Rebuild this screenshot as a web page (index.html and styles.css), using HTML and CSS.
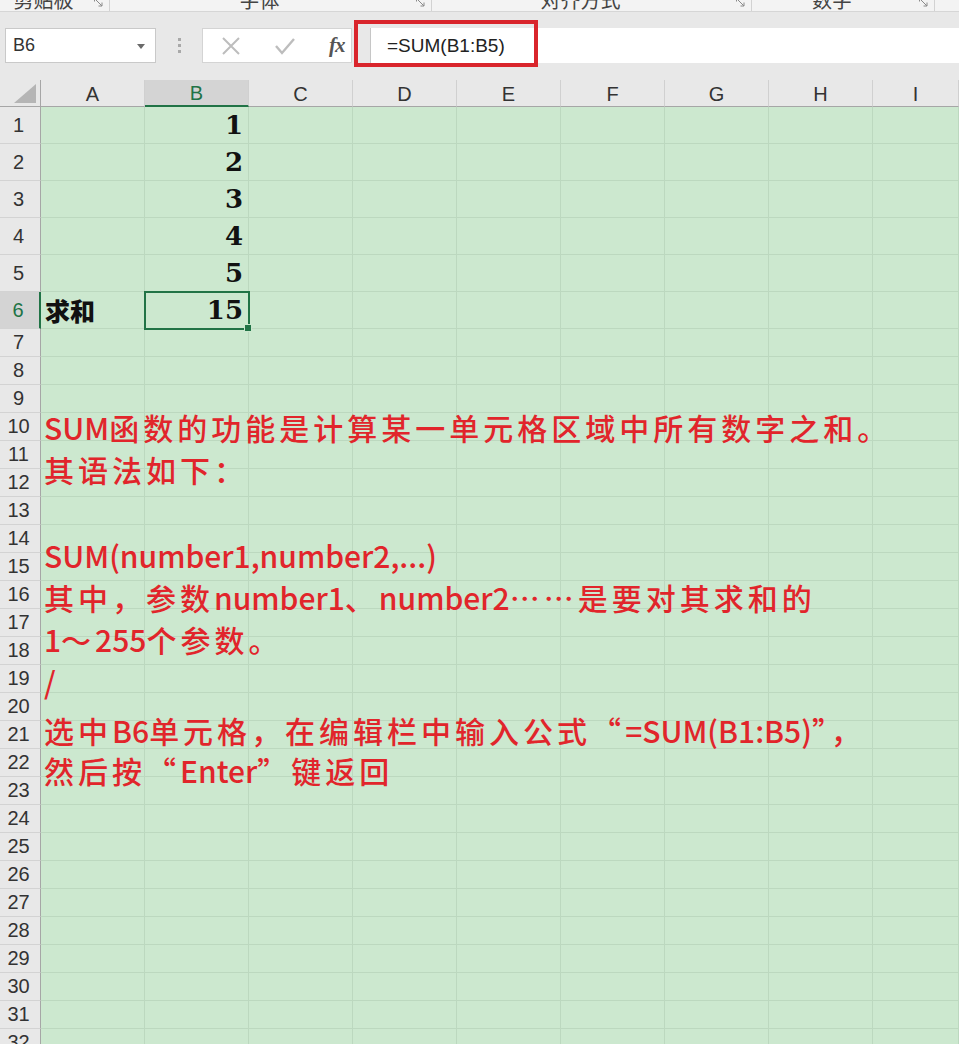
FILE: index.html
```html
<!DOCTYPE html>
<html lang="zh-CN">
<head>
<meta charset="utf-8">
<title>SUM函数</title>
<link rel="stylesheet" href="styles.css">
</head>
<body>
<div class="ribbon">
  <div class="group g1"><span class="label">剪贴板</span><span class="launcher"><svg width="9" height="9" viewBox="0 0 9 9"><path d="M0.5 3.5V0.5H3.5M2 2L8 8M8 4.5V8H4.5" fill="none" stroke="#8a8a8a" stroke-width="1"/></svg></span></div>
  <div class="group g2"><span class="label">字体</span><span class="launcher"><svg width="9" height="9" viewBox="0 0 9 9"><path d="M0.5 3.5V0.5H3.5M2 2L8 8M8 4.5V8H4.5" fill="none" stroke="#8a8a8a" stroke-width="1"/></svg></span></div>
  <div class="group g3"><span class="label">对齐方式</span><span class="launcher"><svg width="9" height="9" viewBox="0 0 9 9"><path d="M0.5 3.5V0.5H3.5M2 2L8 8M8 4.5V8H4.5" fill="none" stroke="#8a8a8a" stroke-width="1"/></svg></span></div>
  <div class="group g4"><span class="label">数字</span><span class="launcher"><svg width="9" height="9" viewBox="0 0 9 9"><path d="M0.5 3.5V0.5H3.5M2 2L8 8M8 4.5V8H4.5" fill="none" stroke="#8a8a8a" stroke-width="1"/></svg></span></div>
</div>

<div class="toolbar">
  <div class="namebox"><span>B6</span><svg class="caret" width="8" height="5" viewBox="0 0 8 5"><path d="M0 0H8L4 5Z" fill="#6a6a6a"/></svg></div>
  <div class="dots"><i></i><i></i><i></i></div>
  <div class="fxbox">
    <svg class="btn-x" width="20" height="20" viewBox="0 0 20 20"><path d="M2 2L18 18M18 2L2 18" stroke="#bdbdbd" stroke-width="2" fill="none"/></svg>
    <svg class="btn-ok" width="22" height="20" viewBox="0 0 22 20"><path d="M2 10L8 17L20 3" stroke="#bdbdbd" stroke-width="2.4" fill="none"/></svg>
    <span class="fx">fx</span>
  </div>
  <div class="formula">=SUM(B1:B5)</div>
  <div class="highlight"></div>
</div>

<div class="sheet">
  <div class="row hdr">
    <div class="corner"><svg width="22" height="19" viewBox="0 0 22 19"><path d="M22 0V19H0Z" fill="#b5b5b5"/></svg></div>
    <div class="ch">A</div><div class="ch sel">B</div><div class="ch">C</div><div class="ch">D</div><div class="ch">E</div><div class="ch">F</div><div class="ch">G</div><div class="ch">H</div><div class="ch last">I</div>
  </div>
  <div class="row tall"><div class="rh">1</div><div class="c"></div><div class="c num">1</div><div class="c"></div><div class="c"></div><div class="c"></div><div class="c"></div><div class="c"></div><div class="c"></div><div class="c last"></div></div>
  <div class="row tall"><div class="rh">2</div><div class="c"></div><div class="c num">2</div><div class="c"></div><div class="c"></div><div class="c"></div><div class="c"></div><div class="c"></div><div class="c"></div><div class="c last"></div></div>
  <div class="row tall"><div class="rh">3</div><div class="c"></div><div class="c num">3</div><div class="c"></div><div class="c"></div><div class="c"></div><div class="c"></div><div class="c"></div><div class="c"></div><div class="c last"></div></div>
  <div class="row tall"><div class="rh">4</div><div class="c"></div><div class="c num">4</div><div class="c"></div><div class="c"></div><div class="c"></div><div class="c"></div><div class="c"></div><div class="c"></div><div class="c last"></div></div>
  <div class="row tall"><div class="rh">5</div><div class="c"></div><div class="c num">5</div><div class="c"></div><div class="c"></div><div class="c"></div><div class="c"></div><div class="c"></div><div class="c"></div><div class="c last"></div></div>
  <div class="row tall"><div class="rh sel">6</div><div class="c label-cell">求和</div><div class="c num active">15</div><div class="c"></div><div class="c"></div><div class="c"></div><div class="c"></div><div class="c"></div><div class="c"></div><div class="c last"></div></div>
  <div class="row"><div class="rh">7</div><div class="c"></div><div class="c"></div><div class="c"></div><div class="c"></div><div class="c"></div><div class="c"></div><div class="c"></div><div class="c"></div><div class="c last"></div></div>
  <div class="row"><div class="rh">8</div><div class="c"></div><div class="c"></div><div class="c"></div><div class="c"></div><div class="c"></div><div class="c"></div><div class="c"></div><div class="c"></div><div class="c last"></div></div>
  <div class="row"><div class="rh">9</div><div class="c"></div><div class="c"></div><div class="c"></div><div class="c"></div><div class="c"></div><div class="c"></div><div class="c"></div><div class="c"></div><div class="c last"></div></div>
  <div class="row"><div class="rh">10</div><div class="c"></div><div class="c"></div><div class="c"></div><div class="c"></div><div class="c"></div><div class="c"></div><div class="c"></div><div class="c"></div><div class="c last"></div></div>
  <div class="row"><div class="rh">11</div><div class="c"></div><div class="c"></div><div class="c"></div><div class="c"></div><div class="c"></div><div class="c"></div><div class="c"></div><div class="c"></div><div class="c last"></div></div>
  <div class="row"><div class="rh">12</div><div class="c"></div><div class="c"></div><div class="c"></div><div class="c"></div><div class="c"></div><div class="c"></div><div class="c"></div><div class="c"></div><div class="c last"></div></div>
  <div class="row"><div class="rh">13</div><div class="c"></div><div class="c"></div><div class="c"></div><div class="c"></div><div class="c"></div><div class="c"></div><div class="c"></div><div class="c"></div><div class="c last"></div></div>
  <div class="row"><div class="rh">14</div><div class="c"></div><div class="c"></div><div class="c"></div><div class="c"></div><div class="c"></div><div class="c"></div><div class="c"></div><div class="c"></div><div class="c last"></div></div>
  <div class="row"><div class="rh">15</div><div class="c"></div><div class="c"></div><div class="c"></div><div class="c"></div><div class="c"></div><div class="c"></div><div class="c"></div><div class="c"></div><div class="c last"></div></div>
  <div class="row"><div class="rh">16</div><div class="c"></div><div class="c"></div><div class="c"></div><div class="c"></div><div class="c"></div><div class="c"></div><div class="c"></div><div class="c"></div><div class="c last"></div></div>
  <div class="row"><div class="rh">17</div><div class="c"></div><div class="c"></div><div class="c"></div><div class="c"></div><div class="c"></div><div class="c"></div><div class="c"></div><div class="c"></div><div class="c last"></div></div>
  <div class="row"><div class="rh">18</div><div class="c"></div><div class="c"></div><div class="c"></div><div class="c"></div><div class="c"></div><div class="c"></div><div class="c"></div><div class="c"></div><div class="c last"></div></div>
  <div class="row"><div class="rh">19</div><div class="c"></div><div class="c"></div><div class="c"></div><div class="c"></div><div class="c"></div><div class="c"></div><div class="c"></div><div class="c"></div><div class="c last"></div></div>
  <div class="row"><div class="rh">20</div><div class="c"></div><div class="c"></div><div class="c"></div><div class="c"></div><div class="c"></div><div class="c"></div><div class="c"></div><div class="c"></div><div class="c last"></div></div>
  <div class="row"><div class="rh">21</div><div class="c"></div><div class="c"></div><div class="c"></div><div class="c"></div><div class="c"></div><div class="c"></div><div class="c"></div><div class="c"></div><div class="c last"></div></div>
  <div class="row"><div class="rh">22</div><div class="c"></div><div class="c"></div><div class="c"></div><div class="c"></div><div class="c"></div><div class="c"></div><div class="c"></div><div class="c"></div><div class="c last"></div></div>
  <div class="row"><div class="rh">23</div><div class="c"></div><div class="c"></div><div class="c"></div><div class="c"></div><div class="c"></div><div class="c"></div><div class="c"></div><div class="c"></div><div class="c last"></div></div>
  <div class="row"><div class="rh">24</div><div class="c"></div><div class="c"></div><div class="c"></div><div class="c"></div><div class="c"></div><div class="c"></div><div class="c"></div><div class="c"></div><div class="c last"></div></div>
  <div class="row"><div class="rh">25</div><div class="c"></div><div class="c"></div><div class="c"></div><div class="c"></div><div class="c"></div><div class="c"></div><div class="c"></div><div class="c"></div><div class="c last"></div></div>
  <div class="row"><div class="rh">26</div><div class="c"></div><div class="c"></div><div class="c"></div><div class="c"></div><div class="c"></div><div class="c"></div><div class="c"></div><div class="c"></div><div class="c last"></div></div>
  <div class="row"><div class="rh">27</div><div class="c"></div><div class="c"></div><div class="c"></div><div class="c"></div><div class="c"></div><div class="c"></div><div class="c"></div><div class="c"></div><div class="c last"></div></div>
  <div class="row"><div class="rh">28</div><div class="c"></div><div class="c"></div><div class="c"></div><div class="c"></div><div class="c"></div><div class="c"></div><div class="c"></div><div class="c"></div><div class="c last"></div></div>
  <div class="row"><div class="rh">29</div><div class="c"></div><div class="c"></div><div class="c"></div><div class="c"></div><div class="c"></div><div class="c"></div><div class="c"></div><div class="c"></div><div class="c last"></div></div>
  <div class="row"><div class="rh">30</div><div class="c"></div><div class="c"></div><div class="c"></div><div class="c"></div><div class="c"></div><div class="c"></div><div class="c"></div><div class="c"></div><div class="c last"></div></div>
  <div class="row"><div class="rh">31</div><div class="c"></div><div class="c"></div><div class="c"></div><div class="c"></div><div class="c"></div><div class="c"></div><div class="c"></div><div class="c"></div><div class="c last"></div></div>
  <div class="row"><div class="rh">32</div><div class="c"></div><div class="c"></div><div class="c"></div><div class="c"></div><div class="c"></div><div class="c"></div><div class="c"></div><div class="c"></div><div class="c last"></div></div>

  <div class="notes">
    <div class="line"><span class="lat">SUM</span>函数的功能是计算某一单元格区域中所有数字之和。</div>
    <div class="line">其语法如下：</div>
    <div class="line gap-lg"><span class="lat">SUM(number1,number2,...)</span></div>
    <div class="line">其中，参数<span class="lat">number1</span>、<span class="lat">number2</span>……是要对其求和的</div>
    <div class="line"><span class="lat">1</span>～<span class="lat">255</span>个参数。</div>
    <div class="line">/</div>
    <div class="line gap-sm">选中<span class="lat">B6</span>单元格，在编辑栏中输入公式“<span class="lat">=SUM(B1:B5)</span>”，</div>
    <div class="line short">然后按“<span class="lat">Enter</span>”键返回</div>
  </div>
</div>
</body>
</html>
```

FILE: styles.css
```css
html, body {
  margin: 0;
  padding: 0;
}
body {
  width: 959px;
  height: 1044px;
  overflow: hidden;
  background: #e8e8e8;
  font-family: "Liberation Sans", "Noto Sans CJK SC", sans-serif;
  color: #333;
}

/* ribbon group labels (cut off at top) */
.ribbon {
  height: 11px;
  background: #f3f3f3;
  border-bottom: 1px solid #d6d6d6;
  display: flex;
  overflow: hidden;
}
.group {
  display: flex;
  box-sizing: border-box;
  border-right: 1px solid #d2d2d2;
  height: 11px;
}
.g1 { width: 110px; }
.g2 { width: 322px; }
.g3 { width: 320px; }
.g4 { width: 183px; }
.label {
  flex: 1;
  text-align: center;
  font-family: "Noto Sans CJK SC", sans-serif;
  font-size: 20px;
  line-height: 20px;
  margin-top: -10px;
  color: #444;
}
.launcher {
  width: 22px;
  display: flex;
  justify-content: center;
  margin-top: -2px;
}

/* formula toolbar */
.toolbar {
  position: relative;
  height: 68px;
  box-sizing: border-box;
  padding-top: 16px;
  display: flex;
  align-items: flex-start;
}
.namebox {
  margin-left: 5px;
  width: 151px;
  height: 35px;
  box-sizing: border-box;
  border: 1px solid #c9c9c9;
  background: #fff;
  display: flex;
  align-items: center;
  justify-content: space-between;
  padding: 0 10px 0 7px;
  font-size: 18px;
  color: #333;
}
.caret { margin-top: 2px; }
.dots {
  width: 46px;
  height: 35px;
  display: flex;
  flex-direction: column;
  align-items: center;
  justify-content: center;
  gap: 3px;
}
.dots i {
  display: block;
  width: 3px;
  height: 3px;
  background: #a9a9a9;
}
.fxbox {
  width: 150px;
  height: 35px;
  box-sizing: border-box;
  background: #fff;
  border: 1px solid #d4d4d4;
  display: flex;
  align-items: center;
}
.btn-x { margin-left: 18px; }
.btn-ok { margin-left: 33px; }
.fx {
  margin-left: 33px;
  font-family: "Liberation Serif", serif;
  font-style: italic;
  font-weight: bold;
  font-size: 21px;
  color: #555;
  letter-spacing: -1px;
}
.formula {
  margin-left: 18px;
  flex: 1;
  height: 35px;
  box-sizing: border-box;
  background: #fff;
  border-left: 1px solid #c6c6c6;
  padding-left: 16px;
  display: flex;
  align-items: center;
  font-size: 19px;
  color: #222;
}
.highlight {
  position: absolute;
  left: 354px;
  top: 8px;
  width: 184px;
  height: 47px;
  box-sizing: border-box;
  border: 4px solid #d9252c;
}

/* sheet grid */
.sheet {
  position: relative;
}
.row {
  display: flex;
  height: 28px;
}
.row.tall { height: 37px; }
.row.hdr { height: 27px; }

.corner {
  width: 41px;
  box-sizing: border-box;
  border-right: 1px solid #a6a6a6;
  border-bottom: 1px solid #a6a6a6;
  background: #e8e8e8;
  display: flex;
  align-items: flex-end;
  justify-content: flex-end;
  padding: 0 4px 3px 0;
}
.ch {
  width: 104px;
  box-sizing: border-box;
  border-right: 1px solid #d0d0d0;
  border-bottom: 1px solid #a6a6a6;
  background: #e8e8e8;
  display: flex;
  align-items: center;
  justify-content: center;
  padding-top: 2px;
  font-size: 20px;
  color: #333;
}
.ch.sel {
  background: #d4d4d4;
  color: #217346;
  border-bottom: 2px solid #217346;
}
.ch.last, .c.last { flex: 1; }

.rh {
  width: 41px;
  box-sizing: border-box;
  border-right: 1px solid #a6a6a6;
  border-bottom: 1px solid #d3d3d3;
  background: #e8e8e8;
  display: flex;
  align-items: center;
  justify-content: center;
  font-size: 20px;
  color: #333;
  padding-right: 3px;
}
.rh.sel {
  background: #d4d4d4;
  color: #217346;
  border-right: 2px solid #217346;
}

.c {
  width: 104px;
  box-sizing: border-box;
  border-right: 1px solid #bcd8bf;
  border-bottom: 1px solid #bcd8bf;
  background: #cce8cf;
  display: flex;
  align-items: center;
}
.num {
  justify-content: flex-end;
  padding-right: 5px;
  font-family: "DejaVu Serif", serif;
  font-weight: bold;
  font-size: 26px;
  color: #111;
}
.label-cell {
  padding-left: 4px;
  font-family: "Noto Sans CJK SC", sans-serif;
  font-weight: 900;
  font-size: 25px;
  color: #111;
}
.active {
  position: relative;
  outline: 2px solid #217346;
  outline-offset: -1px;
  z-index: 1;
}
.active::after {
  content: "";
  position: absolute;
  right: -4px;
  bottom: -4px;
  width: 6px;
  height: 6px;
  background: #217346;
  border: 1px solid #cce8cf;
}

/* red notes overlay (overflowing cell text) */
.notes {
  position: absolute;
  left: 44px;
  top: 326px;
  color: #e1252b;
  font-family: "Noto Sans CJK SC", sans-serif;
  font-weight: 500;
  font-size: 30px;
  letter-spacing: 4px;
  white-space: nowrap;
  z-index: 2;
}
.lat {
  letter-spacing: 0;
}
.line {
  height: 42px;
  line-height: 42px;
}
.gap-lg { margin-top: 44px; }
.gap-sm { margin-top: 7px; }
.line.short { height: 39px; line-height: 39px; }
```
